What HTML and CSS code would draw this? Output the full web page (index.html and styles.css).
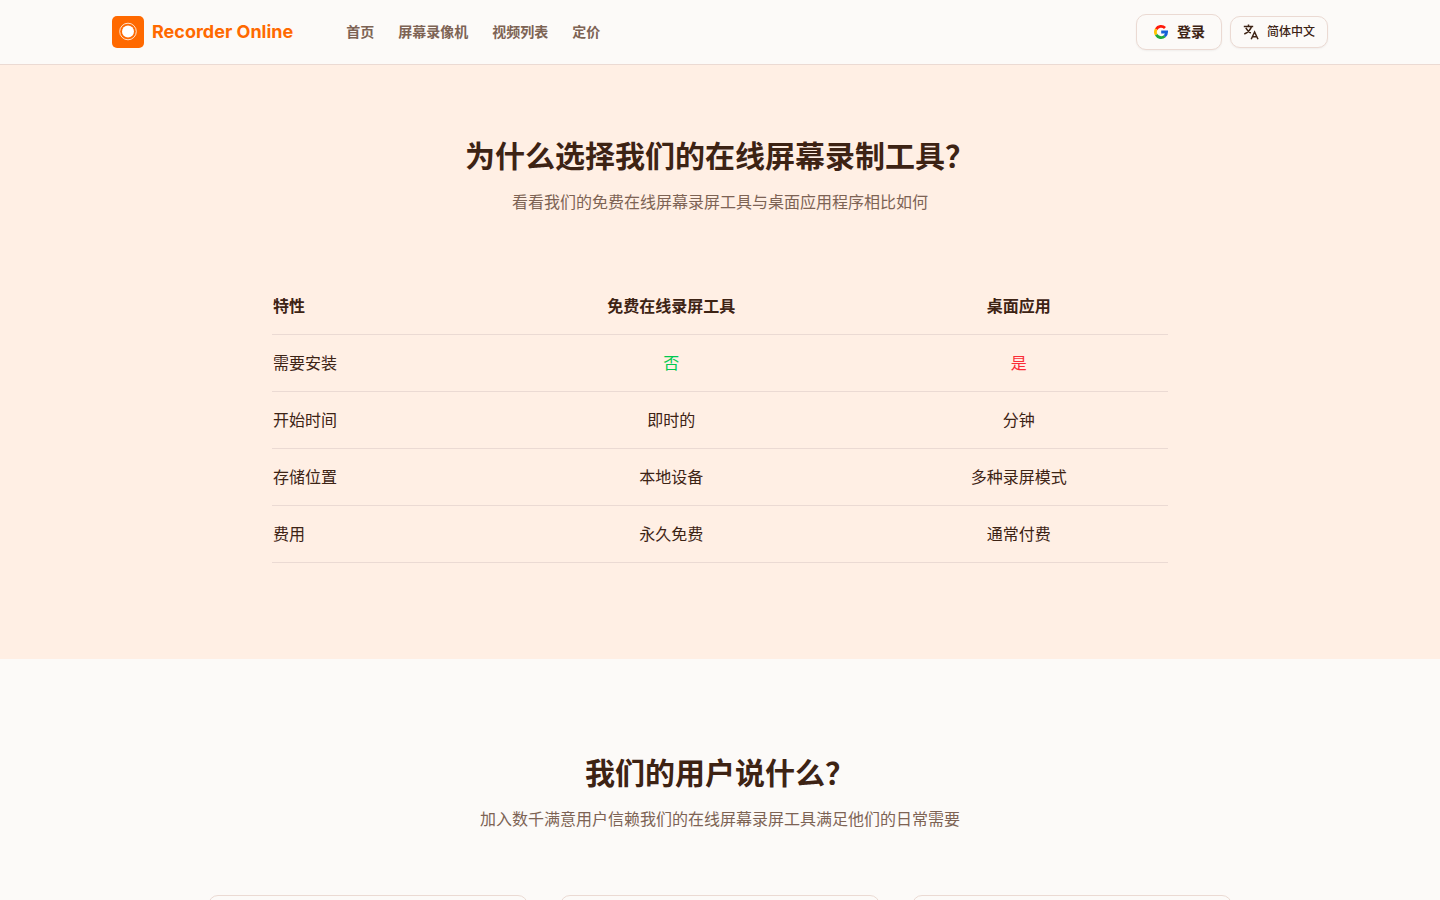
FILE: index.html
```html
<!DOCTYPE html>
<html lang="zh-CN">
<head>
    <meta charset="UTF-8">
    <meta name="viewport" content="width=device-width, initial-scale=1.0">
    <title>Recorder Online</title>
    <link rel="stylesheet" href="styles.css">
</head>
<body>
    <header class="header">
        <div class="header-inner">
            <a class="logo" href="#">
                <svg class="logo-icon" viewBox="0 0 32 32" aria-hidden="true">
                    <rect width="32" height="32" rx="5" fill="#ff6900"/>
                    <circle cx="16" cy="15.5" r="8.3" fill="none" stroke="#fff" stroke-opacity="0.8" stroke-width="1"/>
                    <circle cx="16" cy="15.5" r="6" fill="#fff"/>
                </svg>
                <span>Recorder Online</span>
            </a>
            <nav class="nav">
                <a href="#">首页</a>
                <a href="#">屏幕录像机</a>
                <a href="#">视频列表</a>
                <a href="#">定价</a>
            </nav>
            <div class="actions">
                <button class="button" type="button">
                    <svg class="icon" viewBox="0 0 16 16" fill="none" stroke-width="2.8" aria-hidden="true">
                        <path stroke="#ff1a0a" d="M3.200 5.200A5.600 5.600 0 0 1 12 4"/>
                        <path stroke="#ffc400" d="M3.200 10.800A5.600 5.600 0 0 1 3.200 5.200"/>
                        <path stroke="#1fa83c" d="M11.700 12.200A5.600 5.600 0 0 1 3.200 10.800"/>
                        <path stroke="#1560d8" d="M8.200 8H13.600A5.600 5.600 0 0 1 11.700 12.200"/>
                    </svg>
                    <span>登录</span>
                </button>
                <button class="button button-small" type="button">
                    <svg class="icon" viewBox="0 0 16 16" fill="none" stroke="currentColor" stroke-width="1.5" aria-hidden="true">
                        <path d="M.8 2.500H10.200M5.500 .5V2.500M8.500 2.500C7.500 6 5 8.300 1.300 10M2.800 3.800C4 6 5.500 7.800 7.800 9"/>
                        <path d="M8.200 15.200L11.600 8L15 15.200M9.300 12.800H13.900"/>
                    </svg>
                    <span>简体中文</span>
                </button>
            </div>
        </div>
    </header>

    <main>
        <section class="section compare">
            <h2>为什么选择我们的在线屏幕录制工具？</h2>
            <p class="subtitle">看看我们的免费在线屏幕录屏工具与桌面应用程序相比如何</p>
            <table class="compare-table">
                <thead>
                    <tr>
                        <th scope="col">特性</th>
                        <th scope="col">免费在线录屏工具</th>
                        <th scope="col">桌面应用</th>
                    </tr>
                </thead>
                <tbody>
                    <tr>
                        <td>需要安装</td>
                        <td class="good">否</td>
                        <td class="bad">是</td>
                    </tr>
                    <tr>
                        <td>开始时间</td>
                        <td>即时的</td>
                        <td>分钟</td>
                    </tr>
                    <tr>
                        <td>存储位置</td>
                        <td>本地设备</td>
                        <td>多种录屏模式</td>
                    </tr>
                    <tr>
                        <td>费用</td>
                        <td>永久免费</td>
                        <td>通常付费</td>
                    </tr>
                </tbody>
            </table>
        </section>

        <section class="section">
            <h2>我们的用户说什么？</h2>
            <p class="subtitle">加入数千满意用户信赖我们的在线屏幕录屏工具满足他们的日常需要</p>
            <div class="cards">
                <div class="card"></div>
                <div class="card"></div>
                <div class="card"></div>
            </div>
        </section>
    </main>
</body>
</html>
```
FILE: styles.css
```css
* {
    box-sizing: border-box;
}
body {
    margin: 0;
    font-family: Inter, "Noto Sans CJK SC", sans-serif;
    font-size: 16px;
    line-height: 24px;
    color: #3d2314;
    background: #fcfaf8;
}
a {
    color: inherit;
    text-decoration: none;
}
.header {
    position: sticky;
    top: 0;
    z-index: 10;
    padding: 0 32px;
    background: #fcfaf8;
    border-bottom: 1px solid #ebdad3;
}
.header-inner {
    display: flex;
    align-items: center;
    max-width: 1216px;
    height: 64px;
    margin: 0 auto;
}
.logo {
    display: flex;
    align-items: center;
    gap: 8px;
    font-size: 18px;
    font-weight: 700;
    color: #ff6900;
}
.logo-icon {
    width: 32px;
    height: 32px;
}
.nav {
    display: flex;
    gap: 24px;
    margin-left: 53px;
    font-size: 14px;
    font-weight: 600;
    color: #7d6354;
}
.nav a:hover {
    color: #3d2314;
}
.actions {
    display: flex;
    align-items: center;
    gap: 8px;
    margin-left: auto;
}
.button {
    display: flex;
    align-items: center;
    gap: 8px;
    height: 36px;
    padding: 0 16px;
    font-family: inherit;
    font-size: 14px;
    line-height: 20px;
    font-weight: 600;
    color: #3d2314;
    background: #fcfaf8;
    border: 1px solid #ebdad3;
    border-radius: 10px;
    box-shadow: 0 1px 2px rgba(0, 0, 0, 0.05);
    cursor: pointer;
}
.button-small {
    height: 32px;
    padding: 0 12px;
    font-size: 12px;
    line-height: 16px;
    font-weight: 500;
}
.icon {
    width: 16px;
    height: 16px;
}
.section {
    padding: 96px 32px;
    text-align: center;
}
.compare {
    padding-top: 73px;
    background: #ffefe4;
}
h2 {
    margin: 0 0 16px;
    font-size: 30px;
    line-height: 36px;
    font-weight: 700;
}
.subtitle {
    margin: 0 0 64px;
    color: #7d6354;
}
.compare-table {
    width: 100%;
    max-width: 896px;
    margin: 0 auto;
    border-collapse: collapse;
}
.compare-table th,
.compare-table td {
    padding: 16px 1px;
}
.compare-table tr {
    border-bottom: 1px solid #ebdad3;
}
.compare-table th:first-child,
.compare-table td:first-child {
    text-align: left;
}
.compare-table .good {
    color: #00c950;
}
.compare-table .bad {
    color: #fb2c36;
}
.cards {
    display: grid;
    grid-template-columns: repeat(3, 1fr);
    gap: 32px;
    max-width: 1024px;
    margin: 0 auto;
}
.card {
    min-height: 200px;
    border: 1px solid #ebdad3;
    border-radius: 10px;
}
```
